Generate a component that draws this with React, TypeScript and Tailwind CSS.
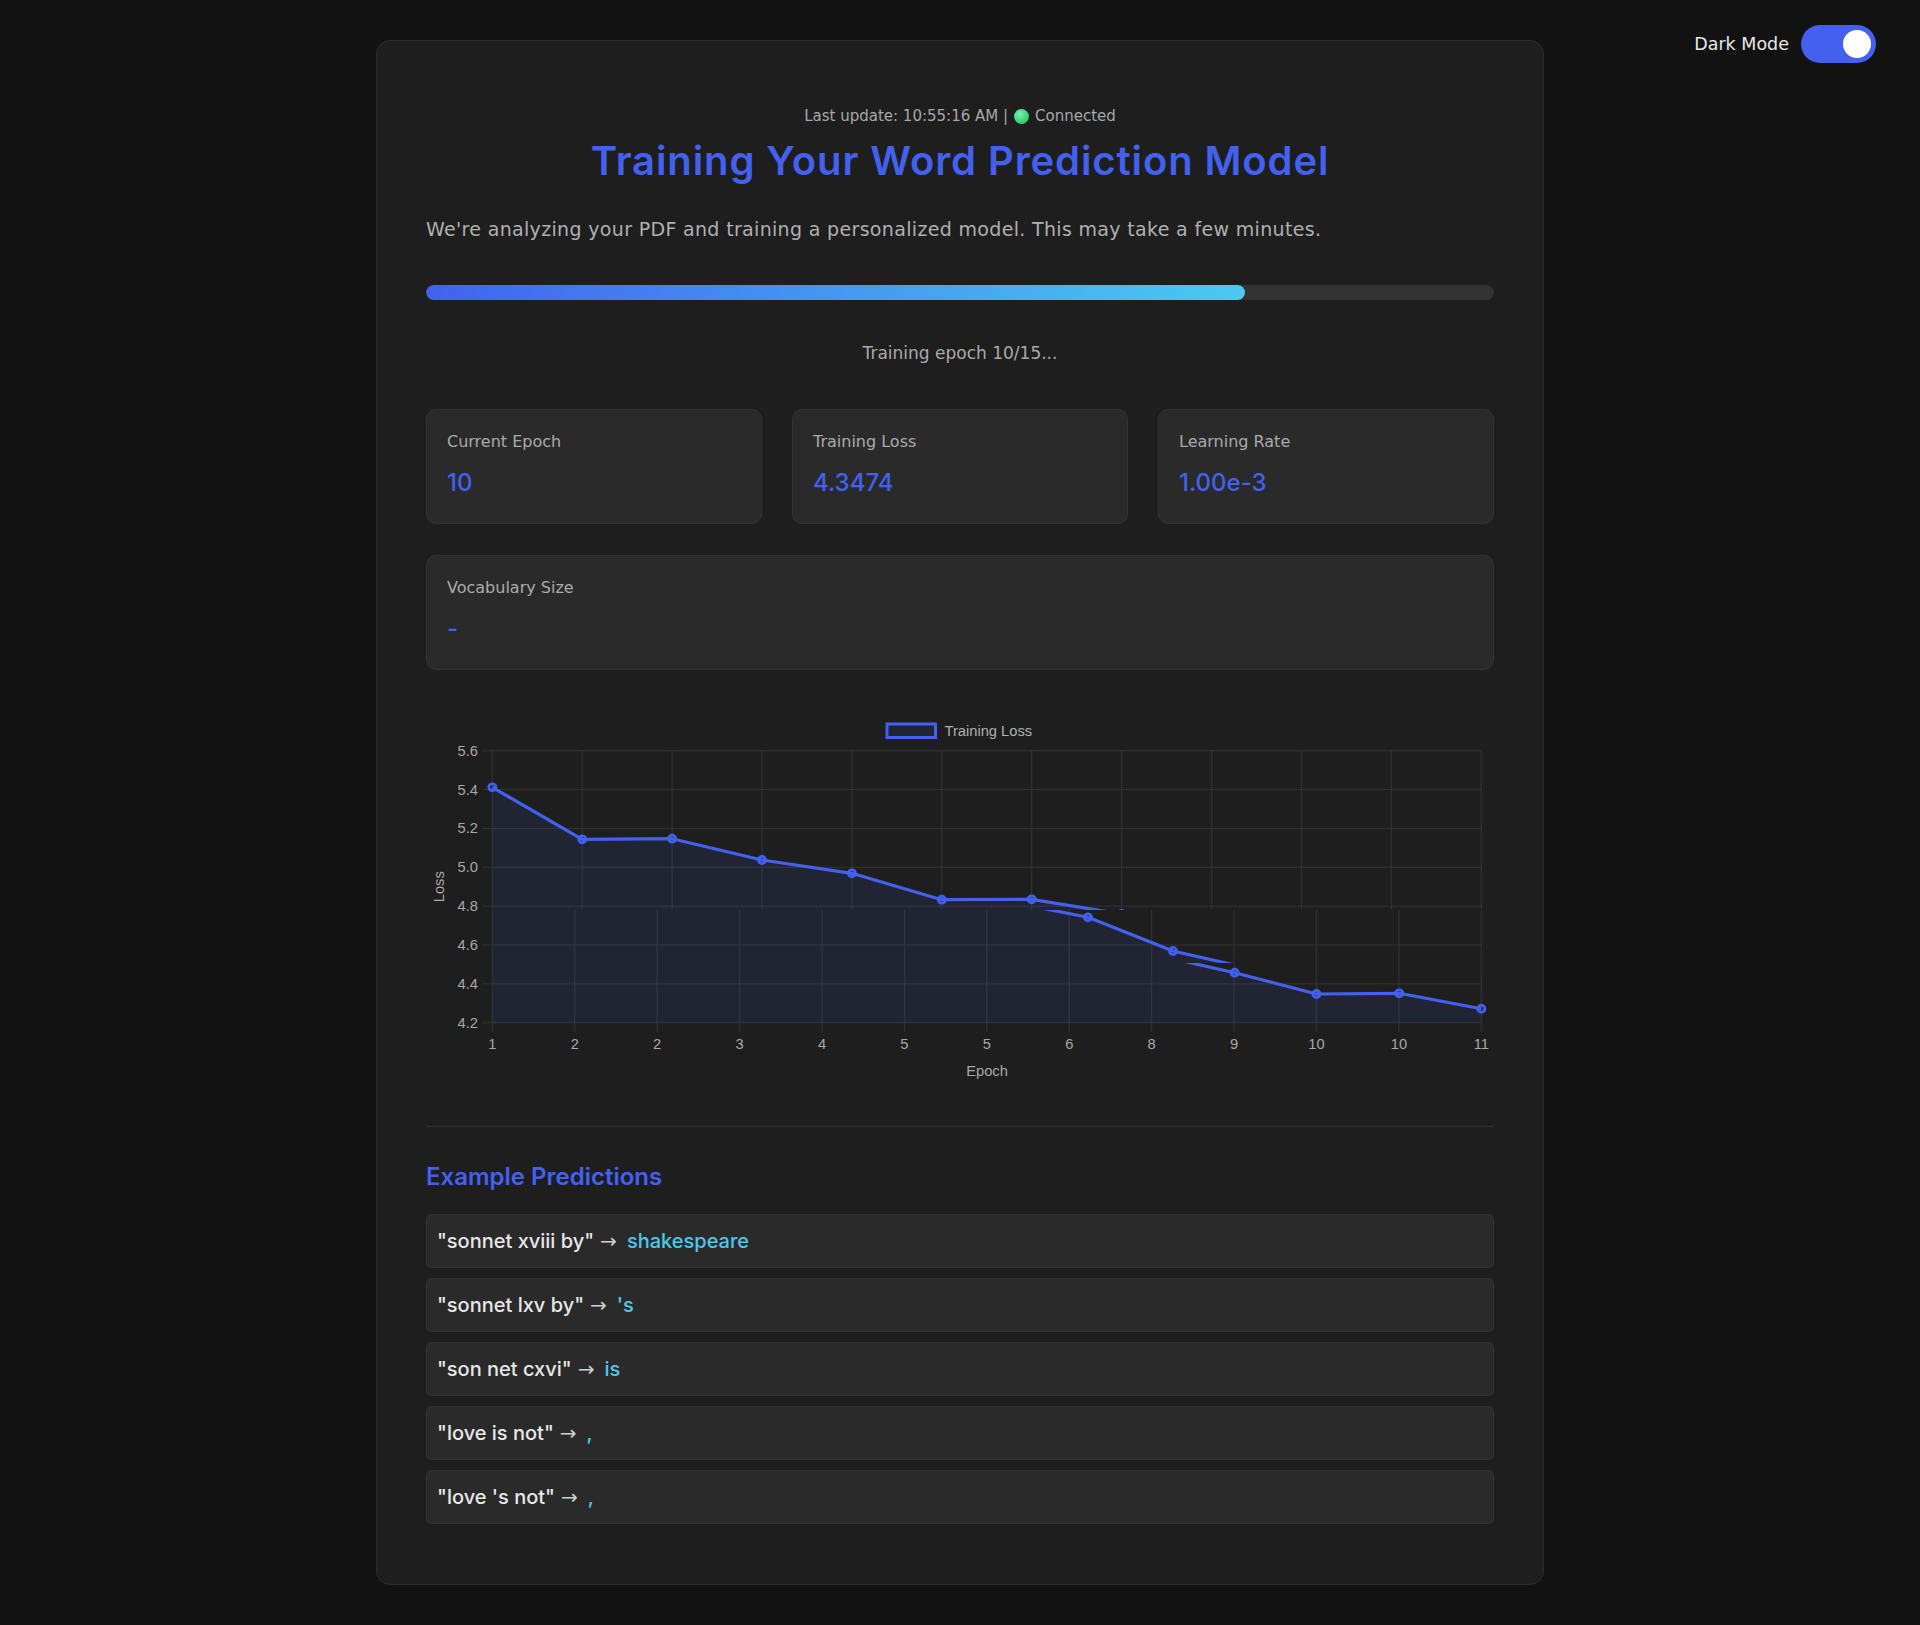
import React from "react";

const FONT = "font-['Inter','Noto_Sans',sans-serif]";
const REG = "font-['DejaVu_Sans','Inter',sans-serif]";

const Y0 = 50.7;
const YSTEP = 38.857;
const yOf = (v: number) => Y0 + ((5.6 - v) / 0.2) * YSTEP;
const PL = 66.3;
const PR = 1055.3;
const PB = 322.7;

function Chart() {
  const yTicks = [5.6, 5.4, 5.2, 5.0, 4.8, 4.6, 4.4, 4.2];
  const grid12 = Array.from({ length: 12 }, (_, k) => PL + k * 89.9);
  const grid13 = Array.from({ length: 13 }, (_, j) => PL + j * 82.42);
  const xLabels = ["1", "2", "2", "3", "4", "5", "5", "6", "8", "9", "10", "10", "11"];

  const band1: [number, number][] = [
    [66.3, 87.3],
    [156.2, 139.3],
    [246.1, 138.7],
    [336, 160],
    [425.9, 173.3],
    [515.8, 199.7],
    [605.7, 199.3],
    [695.6, 214],
    [785.5, 240],
    [875.4, 256],
    [965.3, 275],
    [1055.3, 290],
  ];
  const band2: [number, number][] = [
    [66.3, 100],
    [577, 200.5],
    [662, 217.3],
    [747, 251],
    [832, 270.3],
    [917, 290],
    [1055.3, 305],
  ];
  const band3: [number, number][] = [
    [66.3, 100],
    [725.7, 254.1],
    [808.7, 272.7],
    [890.5, 294],
    [973.3, 293.3],
    [1055.3, 308.7],
  ];
  const linePath = (pts: [number, number][]) =>
    pts.map((p, i) => `${i === 0 ? "M" : "L"}${p[0]},${p[1]}`).join(" ");
  const fillPath = (pts: [number, number][]) =>
    `${linePath(pts)} L${pts[pts.length - 1][0]},${PB} L${pts[0][0]},${PB} Z`;

  const blue = "#4361ee";
  const fill = "rgba(67,97,238,0.1)";
  const gridC = "#353535";

  const pts1 = band1.slice(0, 8);
  const pts2 = [band2[2], band2[3], band2[4]];
  const pts3 = band3.slice(2);

  return (
    <svg width={1068} height={390} className="block" style={{ fontFamily: "'Liberation Sans', Arial, sans-serif" }}>
      <defs>
        <clipPath id="b1">
          <rect x={0} y={0} width={1068} height={210} />
        </clipPath>
        <clipPath id="b2">
          <rect x={0} y={210} width={1068} height={53} />
        </clipPath>
        <clipPath id="b3">
          <rect x={0} y={263} width={1068} height={127} />
        </clipPath>
      </defs>

      <rect x={461} y={24} width={48.5} height={13.5} fill={fill} stroke={blue} strokeWidth={3} />
      <text x={518.5} y={35.5} fontSize={14.7} fill="#b0b0b0">
        Training Loss
      </text>

      {yTicks.map((v) => (
        <g key={v}>
          <line x1={56.5} x2={PR} y1={yOf(v)} y2={yOf(v)} stroke={gridC} strokeWidth={1} />
          <text x={52} y={yOf(v) + 5} fontSize={14.7} fill="#a8a8a8" textAnchor="end">
            {v.toFixed(1)}
          </text>
        </g>
      ))}

      <g clipPath="url(#b1)">
        {grid12.map((x, i) => (
          <line key={i} x1={x} x2={x} y1={Y0} y2={209.3} stroke={gridC} strokeWidth={1} />
        ))}
        <path d={fillPath(band1)} fill={fill} />
        <path d={linePath(band1)} fill="none" stroke={blue} strokeWidth={3.2} strokeLinejoin="round" />
        {pts1.map((p, i) => (
          <circle key={i} cx={p[0]} cy={p[1]} r={3.6} fill="rgba(67,97,238,0.15)" stroke={blue} strokeWidth={2.6} />
        ))}
      </g>

      {grid13.map((x, i) => (
        <line key={i} x1={x} x2={x} y1={210} y2={331.7} stroke={gridC} strokeWidth={1} />
      ))}

      <g clipPath="url(#b2)">
        <path d={fillPath(band2)} fill={fill} />
        <path d={linePath(band2)} fill="none" stroke={blue} strokeWidth={3.2} strokeLinejoin="round" />
        {pts2.map((p, i) => (
          <circle key={i} cx={p[0]} cy={p[1]} r={3.6} fill="rgba(67,97,238,0.15)" stroke={blue} strokeWidth={2.6} />
        ))}
      </g>

      <g clipPath="url(#b3)">
        <path d={fillPath(band3)} fill={fill} />
        <path d={linePath(band3)} fill="none" stroke={blue} strokeWidth={3.2} strokeLinejoin="round" />
        {pts3.map((p, i) => (
          <circle key={i} cx={p[0]} cy={p[1]} r={3.6} fill="rgba(67,97,238,0.15)" stroke={blue} strokeWidth={2.6} />
        ))}
      </g>

      {grid13.map((x, i) => (
        <text key={i} x={x} y={348.5} fontSize={14.7} fill="#a8a8a8" textAnchor="middle">
          {xLabels[i]}
        </text>
      ))}
      <text x={561} y={376} fontSize={14.7} fill="#a8a8a8" textAnchor="middle">
        Epoch
      </text>
      <text
        x={0}
        y={0}
        fontSize={14.7}
        fill="#a8a8a8"
        textAnchor="middle"
        transform="translate(18,186.7) rotate(-90)"
      >
        Loss
      </text>
    </svg>
  );
}

function Stat({ label, value, wide }: { label: string; value: string; wide?: boolean }) {
  return (
    <div
      className={`h-[115px] rounded-[10px] border border-[#333333] bg-[#2a2a2a] px-[20px] pt-[20px] ${
        wide ? "col-span-3" : ""
      }`}
    >
      <div className={`text-[16px] leading-[24px] text-[#aaaaaa] ${REG}`}>{label}</div>
      <div className="mt-[11px] text-[24px] font-medium leading-[36px] text-[#4361ee]">{value}</div>
    </div>
  );
}

function Row({ q, p }: { q: string; p: string }) {
  return (
    <div className="mb-[10px] flex h-[54px] items-center rounded-[5px] border border-[#333333] bg-[#2a2a2a] px-[10px] text-[20px] font-medium">
      <span className="text-[#e8e8e8]">"{q}"</span>
      <span className={`ml-[6px] text-[#d0d0d0] ${REG} text-[20px]`}>→</span>
      <span className="ml-[10px] text-[#4cc9f0]">{p}</span>
    </div>
  );
}

export default function App() {
  return (
    <div className={`relative min-h-[1625px] bg-[#121212] pt-[40px] pb-[41px] ${FONT}`}>
      <div className="absolute right-[44px] top-[25px] flex items-center gap-[12px]">
        <span className={`text-[17.5px] text-[#e8e8e8] ${REG}`}>Dark Mode</span>
        <div className="flex h-[38px] w-[75px] items-center justify-end rounded-full bg-[#4361ee] pr-[5px]">
          <div className="h-[28px] w-[28px] rounded-full bg-white" />
        </div>
      </div>

      <div className="mx-auto w-[1168px] rounded-[14px] border border-[#2c2c2c] bg-[#1e1e1e] p-[49px]">
        <div className={`mt-[16px] flex items-center justify-center text-[15px] leading-[20px] text-[#a8a8a8] ${REG}`}>
          <span>Last update: 10:55:16 AM |</span>
          <span className="ml-[6px] mr-[6px] inline-block h-[15px] w-[15px] rounded-full bg-[radial-gradient(circle_at_40%_35%,#7ef0a8,#2ecc71_70%)]" />
          <span>Connected</span>
        </div>
        <h1 className="mt-[11px] text-center text-[40px] font-semibold leading-[48px] tracking-[0.9px] text-[#4361ee]">
          Training Your Word Prediction Model
        </h1>
        <p className={`mt-[30px] text-[19px] leading-[28px] tracking-[0.33px] text-[#b0b0b0] ${REG}`}>
          We're analyzing your PDF and training a personalized model. This may take a few minutes.
        </p>
        <div className="mt-[42px] h-[15px] w-full overflow-hidden rounded-full bg-[#333333]">
          <div className="h-full w-[76.7%] rounded-full bg-gradient-to-r from-[#4361ee] to-[#4cc9f0]" />
        </div>
        <div className={`mt-[41px] text-center text-[17px] leading-[24px] text-[#aaaaaa] ${REG}`}>
          Training epoch 10/15...
        </div>

        <div className="mt-[44px] grid grid-cols-3 gap-x-[30px] gap-y-[31px]">
          <Stat label="Current Epoch" value="10" />
          <Stat label="Training Loss" value="4.3474" />
          <Stat label="Learning Rate" value="1.00e-3" />
          <Stat label="Vocabulary Size" value="-" wide />
        </div>

        <div className="mt-[30px]">
          <Chart />
        </div>

        <div className="mt-[36px] border-t border-[#333333]" />

        <h2 className="mt-[34px] text-[24px] font-semibold leading-[32px] text-[#4361ee]">Example Predictions</h2>
        <div className="mt-[21px] pb-[1px]">
          <Row q="sonnet xviii by" p="shakespeare" />
          <Row q="sonnet lxv by" p="'s" />
          <Row q="son net cxvi" p="is" />
          <Row q="love is not" p="," />
          <Row q="love 's not" p="," />
        </div>
      </div>
    </div>
  );
}
